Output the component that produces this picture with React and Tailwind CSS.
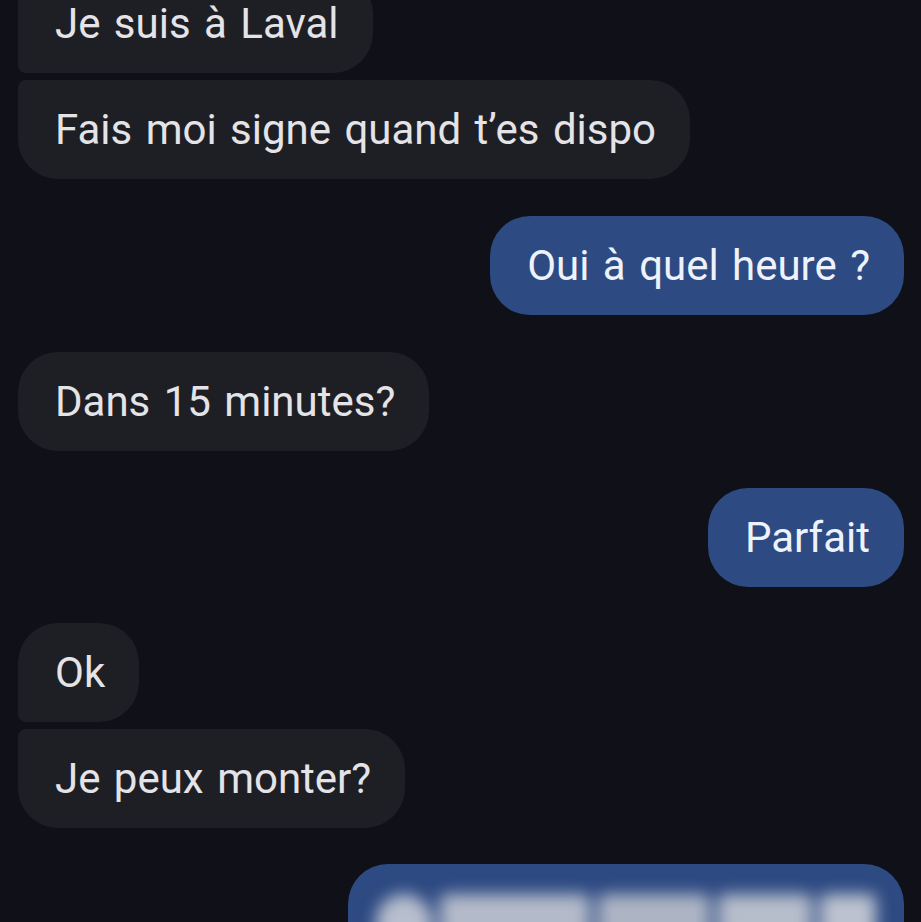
import React from 'react';

const messages = [
  { id: 1, text: 'Je suis à Laval', mine: false, shape: 'rounded-r-[40px] rounded-l-[8px]', gap: '' },
  { id: 2, text: 'Fais moi signe quand t’es dispo', mine: false, shape: 'rounded-[40px] rounded-tl-[8px]', gap: 'mt-[7px]' },
  { id: 3, text: 'Oui à quel heure ?', mine: true, shape: 'rounded-[40px]', gap: 'mt-[37px]' },
  { id: 4, text: 'Dans 15 minutes?', mine: false, shape: 'rounded-[40px]', gap: 'mt-[37px]' },
  { id: 5, text: 'Parfait', mine: true, shape: 'rounded-[40px]', gap: 'mt-[37px]' },
  { id: 6, text: 'Ok', mine: false, shape: 'rounded-[40px] rounded-bl-[8px]', gap: 'mt-[36px]' },
  { id: 7, text: 'Je peux monter?', mine: false, shape: 'rounded-[40px] rounded-tl-[8px]', gap: 'mt-[7px]' },
];

function Bubble({ text, mine, shape, gap }) {
  return (
    <div className={`flex ${mine ? 'justify-end' : 'justify-start'} ${gap}`}>
      <div
        className={`h-[99px] flex items-center pl-[37px] pr-[34px] text-[42px] leading-none [word-spacing:3px] whitespace-nowrap ${shape} ${
          mine ? 'bg-[#2d4a82] text-[#eef2fb]' : 'bg-[#1e1f25] text-[#e4e4e8]'
        }`}
      >
        {text}
      </div>
    </div>
  );
}

function App() {
  return (
    <div
      className="h-[922px] overflow-hidden bg-[#0f1018] pl-[18px] pr-[17px]"
      style={{ fontFamily: 'Roboto, "Noto Sans", sans-serif' }}
    >
      <div className="-mt-[26px]">
        {messages.map((m) => (
          <Bubble key={m.id} {...m} />
        ))}
        <div className="flex justify-end mt-[36px]">
          <div className="w-[556px] h-[110px] rounded-[40px] bg-[#2d4a82] pt-[30px] px-[28px] overflow-hidden">
            <div className="flex gap-[8px] blur-[8px] opacity-90">
              <div className="w-[60px] h-[64px] rounded-full bg-[#c8ccd6]" />
              <div className="w-[160px] h-[64px] rounded-md bg-[#c3c7d1]" />
              <div className="w-[120px] h-[64px] rounded-md bg-[#bcc1cc]" />
              <div className="w-[100px] h-[64px] rounded-md bg-[#c6cad3]" />
              <div className="w-[60px] h-[64px] rounded-md bg-[#cdd0d8]" />
            </div>
          </div>
        </div>
      </div>
    </div>
  );
}

export default App;
